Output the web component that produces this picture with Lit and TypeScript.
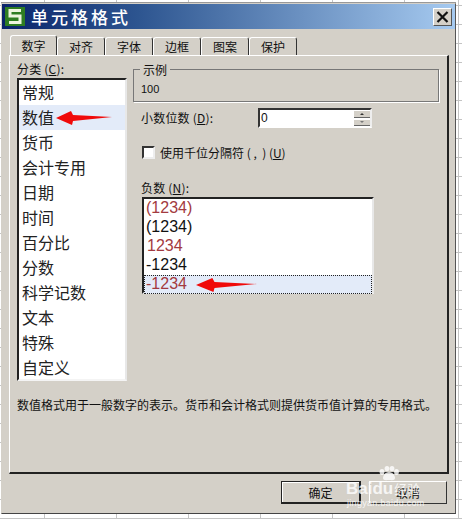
import { LitElement, html, css } from "lit";
import { customElement } from "lit/decorators.js";

const cats = ["常规","数值","货币","会计专用","日期","时间","百分比","分数","科学记数","文本","特殊","自定义"];
const tabs = ["数字","对齐","字体","边框","图案","保护"];
const negs = [["(1234)","red"],["(1234)",""],["1234","red ind"],["-1234",""],["-1234","red sel"]];
const arrow = html`<svg class="arrow" width="56" height="16" viewBox="0 0 56 16" preserveAspectRatio="none"><path d="M0 8 L15 1 L17 5 L56 7 L17 11 L16 15 Z" fill="#f00a0a"/></svg>`;

@customElement("app-root")
export class AppRoot extends LitElement {
  static styles = css`
    :host { display: block; width: 462px; height: 519px; overflow: hidden; box-sizing: border-box; padding: 3px 6px 5px 1px;
      font-family: "Noto Sans CJK SC", sans-serif; color: #111; background-color: #fff;
      background-image: linear-gradient(90deg, transparent 458px, #c4c4c4 458px, #c4c4c4 459px, transparent 459px), linear-gradient(#c4c4c4 1px, transparent 1px), linear-gradient(90deg, #c4c4c4 1px, transparent 1px);
      background-size: 100% 100%, 72px 19px, 72px 19px; background-position: 0 0, 44px 5px, 44px 0; }
    .dlg { height: 511px; box-sizing: border-box; background: #d4d0c8; border: 1px solid #d4d0c8; border-right-color: #555; border-bottom-color: #444; box-shadow: 0 -1px 0 #999; display: flex; flex-direction: column; position: relative; }
    .title { height: 25px; background: linear-gradient(90deg, #0a246a 0%, #2d5590 30%, #a6caf0 100%); display: flex; align-items: center; padding: 0 3px; gap: 6px; }
    .logo { flex: none; display: block; }
    .t { color: #fff; font-size: 17px; font-weight: 500; letter-spacing: 3px; flex: 1; }
    .close { width: 19px; height: 18px; background: #d4d0c8; border: 1px solid; border-color: #fff #555 #555 #fff; box-sizing: border-box; display: flex; align-items: center; justify-content: center; }
    .tabs { display: flex; padding: 8px 0 0 8px; height: 26px; box-sizing: border-box; align-items: flex-end; }
    .tab { width: 48px; height: 18px; box-sizing: border-box; border: 1px solid; border-color: #fff #333 transparent #fff; border-bottom: 0; border-radius: 3px 3px 0 0; font-size: 12px; line-height: 17px; text-align: center; }
    .tab.on { width: 47px; height: 20px; line-height: 20px; }
    .panel { margin-left: 7px; width: 440px; height: 419px; box-sizing: border-box; border: 1px solid; border-color: #fff #222 #222 #fff; border-bottom-width: 2px; border-right-width: 2px; padding: 5px 8px 0 7px; }
    .cols { display: flex; gap: 6px; height: 321px; }
    .left { width: 110px; }
    .lab { font-size: 12px; line-height: 16px; height: 16px; white-space: nowrap; letter-spacing: .2px; }
    u { text-underline-offset: 1px; }
    .list { margin-top: 1px; height: 303px; width: 110px; box-sizing: border-box; background: #fff; border: 2px solid; border-color: #222 #e8e8e8 #f4f4f4 #222; }
    .cat { height: 25px; line-height: 24px; font-size: 16px; padding-left: 3px; position: relative; color: #222; }
    .cat.on { background: #e3ebf9; }
    .arrow { position: absolute; }
    .cat .arrow { left: 37px; top: 5px; }
    .right { width: 307px; padding-top: 8px; }
    .group { height: 33px; box-sizing: border-box; border: 1px solid #777; box-shadow: 1px 1px 0 #fff; padding: 12px 0 0 7px; position: relative; }
    .legend { position: absolute; left: 6px; top: -8px; background: #d4d0c8; padding: 0 3px; font-size: 12px; line-height: 15px; }
    .val { font: 11px/14px "Liberation Sans", sans-serif; }
    .row { display: flex; align-items: center; padding-left: 8px; }
    .dec { margin-top: 6px; height: 20px; justify-content: space-between; padding-right: 67px; }
    .spin { width: 114px; height: 20px; box-sizing: border-box; background: #fff; border: 2px solid; border-color: #333 #eee #fff #333; display: flex; font: 12px/16px "Liberation Sans", sans-serif; padding-left: 1px; justify-content: space-between; }
    .btns { width: 16px; display: flex; flex-direction: column; gap: 1px; }
    .btns i { flex: 1; background: #d4d0c8; border-top: 1px solid #fff; border-bottom: 1px solid #666; display: flex; align-items: center; justify-content: center; }
    .tri { width: 0; height: 0; border: 2px solid transparent; border-top: 0; border-bottom: 2px solid #333; }
    .tri.d { border-bottom: 0; border-top: 2px solid #777; }
    .chk { margin-top: 18px; height: 13px; gap: 5px; font-size: 12px; white-space: pre; padding-left: 9px; }
    .cb { width: 13px; height: 13px; box-sizing: border-box; background: #fff; border: 2px solid; border-color: #333 #eee #eee #333; flex: none; }
    .neglab { margin-top: 21px; padding-left: 8px; }
    .neg { margin: 1px 0 0 9px; width: 232px; height: 97px; box-sizing: border-box; background: #fff; border: 2px solid; border-color: #222 #e8e8e8 #f0f0f0 #222; font: 16px/17px "Liberation Sans", sans-serif; }
    .n { height: 19px; padding-left: 2px; position: relative; color: #111; }
    .n.ind { padding-left: 3px; }
    .n.red { color: #a33a40; }
    .n.sel { background: #e3ebf9; outline: 1px dotted #222; outline-offset: -1px; }
    .n .arrow { left: 52px; top: 2px; width: 61px; }
    .desc { font-size: 12px; line-height: 16px; margin-top: 15px; white-space: nowrap; }
    .foot { display: flex; justify-content: flex-end; gap: 8px; padding: 7px 8px 0 0; }
    .btn { width: 80px; height: 23px; box-sizing: border-box; text-align: center; font-size: 12px; line-height: 21px; border: 1px solid; }
    .ok { border-color: #222; border-width: 1px 2px 2px 1px; box-shadow: inset 1px 1px 0 #fff; }
    .cancel { width: 78px; border-color: #fff #333 #333 #fff; }
    .wm { position: absolute; left: 344px; top: 473px; width: 92px; height: 36px; color: #fff; pointer-events: none; opacity: .8; }
    .paw { position: absolute; left: 33px; top: -11px; }
    .wb { position: absolute; left: 0; top: 2px; display: flex; align-items: baseline; gap: 0; font: bold 17px/20px "Liberation Sans", sans-serif; white-space: nowrap; }
    .wb em { font: 400 13px/20px "Noto Sans CJK SC", sans-serif; margin-left: 1px; }
    .ws { position: absolute; left: 1px; top: 21px; font: 9px/11px "Liberation Sans", sans-serif; letter-spacing: .3px; white-space: nowrap; }
  `;
  render() {
    return html`<div class="dlg">
      <div class="title">
        <svg class="logo" width="20" height="19" viewBox="0 0 20 19"><rect width="20" height="19" fill="#2f7d22"/><path d="M16 3.5 H5 V9 H15 V15.5 H4" fill="none" stroke="#eef5e0" stroke-width="3"/></svg>
        <div class="t">单元格格式</div>
        <div class="close"><svg width="13" height="12" viewBox="0 0 13 12"><path d="M1.5 1 L11.5 11 M11.5 1 L1.5 11" stroke="#111" stroke-width="2.2"/></svg></div></div>
      <div class="tabs">${tabs.map((t,i)=>html`<div class="tab ${i===0?"on":""}">${t}</div>`)}</div>
      <div class="panel">
        <div class="cols">
          <div class="left">
            <div class="lab">分类 (<u>C</u>):</div>
            <div class="list">${cats.map((c,i)=>html`<div class="cat ${i===1?"on":""}">${c}${i===1?arrow:""}</div>`)}</div>
          </div>
          <div class="right">
            <div class="group"><div class="legend">示例</div><div class="val">100</div></div>
            <div class="row dec"><div class="lab">小数位数 (<u>D</u>):</div>
              <div class="spin"><span>0</span><div class="btns"><i><b class="tri"></b></i><i><b class="tri d"></b></i></div></div></div>
            <div class="row chk"><div class="cb"></div><span>使用千位分隔符 (\u00a0,\u00a0\u00a0) (<u>U</u>)</span></div>
            <div class="lab neglab">负数 (<u>N</u>):</div>
            <div class="neg">${negs.map(([v,c])=>html`<div class="n ${c}">${v}${c.includes("sel")?arrow:""}</div>`)}</div>
          </div>
        </div>
        <div class="desc">数值格式用于一般数字的表示。货币和会计格式则提供货币值计算的专用格式。</div>
      </div>
      <div class="foot"><div class="btn ok">确定</div><div class="btn cancel">取消</div></div>
      <div class="wm">
        <svg class="paw" width="20" height="15" viewBox="0 0 20 15" fill="#fff"><ellipse cx="3" cy="6" rx="2.4" ry="3"/><ellipse cx="8" cy="2.6" rx="2.4" ry="2.6"/><ellipse cx="13" cy="2.6" rx="2.4" ry="2.6"/><ellipse cx="17.5" cy="6" rx="2.4" ry="3"/><path d="M10 6 C6 6 4 10 4 12 C4 15 8 14 10 14 C12 14 16 15 16 12 C16 10 14 6 10 6 Z"/></svg>
        <div class="wb">Bai<span>du</span><em>经验</em></div>
        <div class="ws">jingyan.baidu.com</div>
      </div>
    </div>`;
  }
}
